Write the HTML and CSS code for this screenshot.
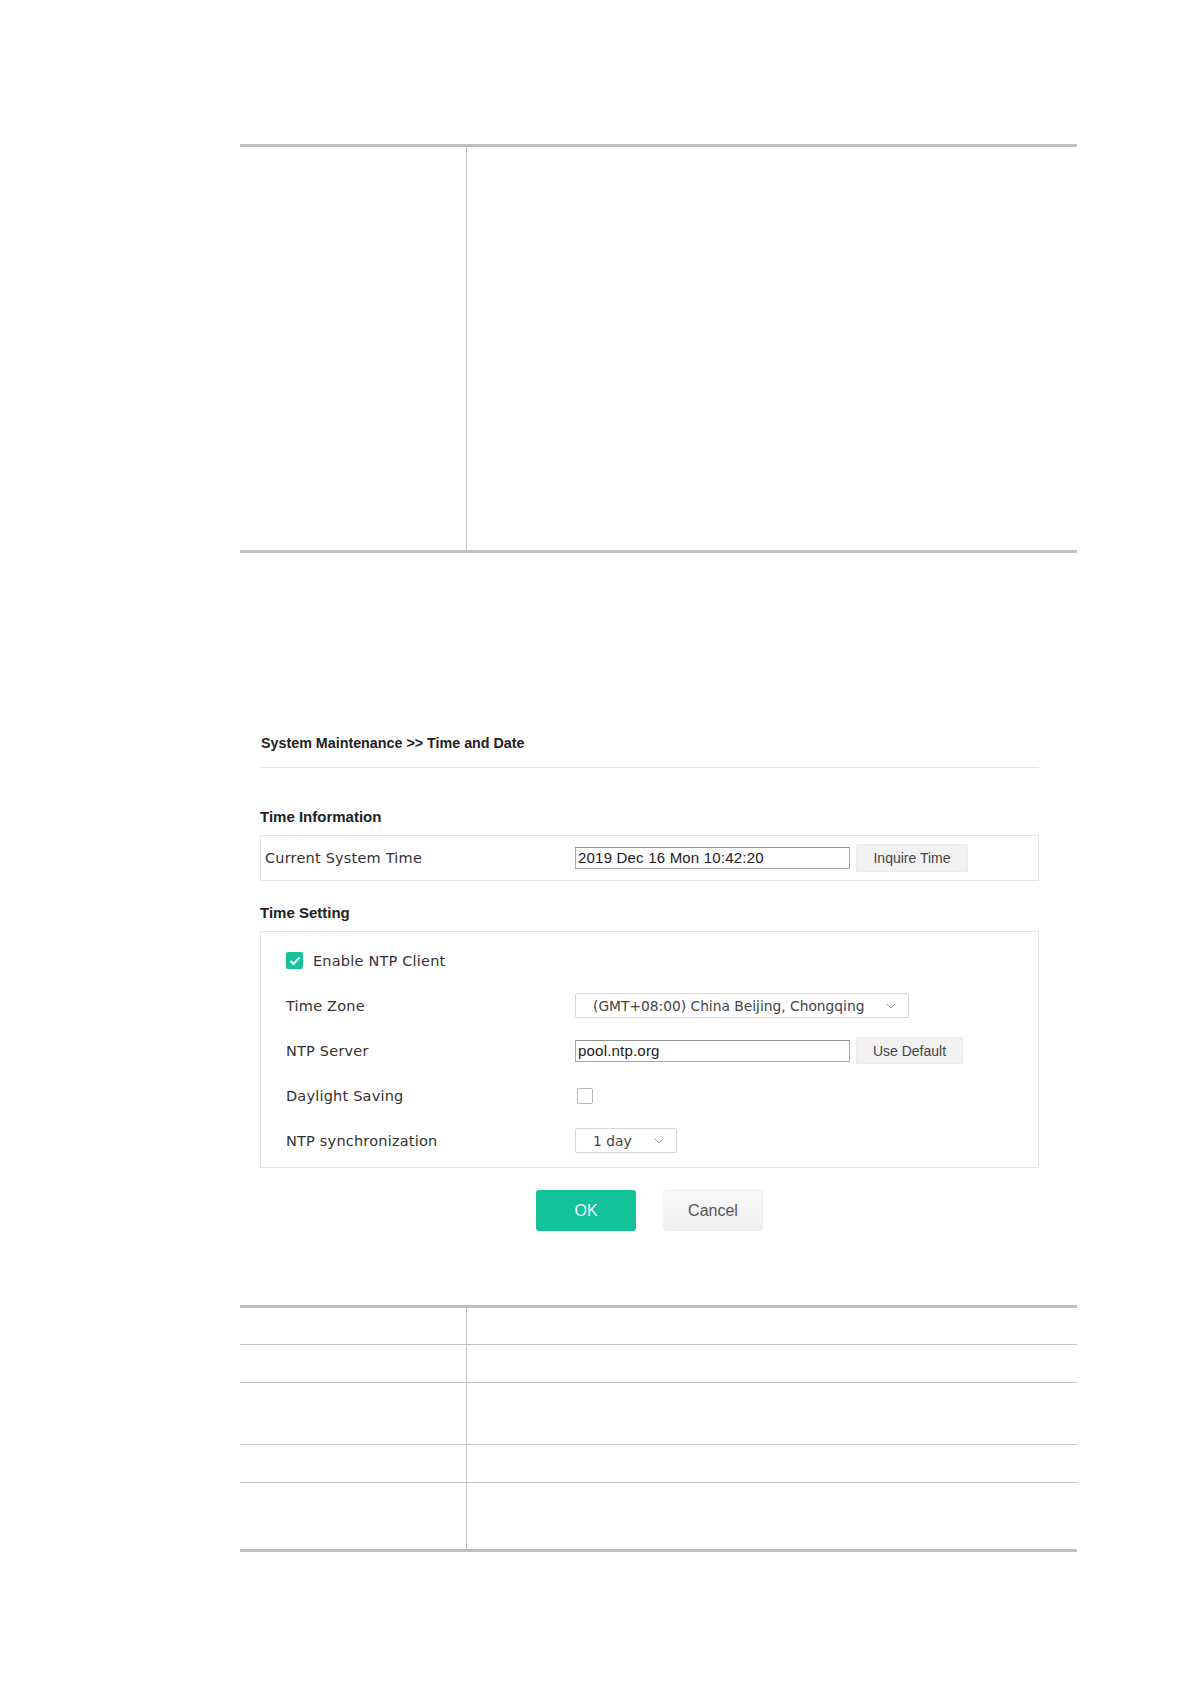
FILE: index.html
```html
<!DOCTYPE html>
<html lang="en">
<head>
  <meta charset="UTF-8" />
  <title>System Maintenance >> Time and Date</title>
  <link rel="stylesheet" href="styles.css">
</head>
<body>

<table class="doc-table top-table">
  <tr><td class="col-a"></td><td></td></tr>
</table>

<div class="panel">
  <div class="panel-title">System Maintenance &gt;&gt; Time and Date</div>

  <div class="section-title">Time Information</div>
  <div class="box box-info">
    <div class="row">
      <span class="label">Current System Time</span>
      <div class="control">
        <span class="text-input">2019 Dec 16 Mon 10:42:20</span>
        <span class="btn-small">Inquire Time</span>
      </div>
    </div>
  </div>

  <div class="section-title">Time Setting</div>
  <div class="box box-setting">
    <div class="row">
      <span class="check on">
        <svg width="12" height="10" viewBox="0 0 12 10"><polyline points="1.5,5 4.5,8 10.5,1.5" fill="none" stroke="#fff" stroke-width="2"/></svg>
      </span>
      <span class="check-label">Enable NTP Client</span>
    </div>
    <div class="row">
      <span class="label">Time Zone</span>
      <div class="control">
        <span class="select select-zone">(GMT+08:00) China Beijing, Chongqing
          <svg class="chev" width="10" height="6" viewBox="0 0 10 6"><polyline points="1,1 5,5 9,1" fill="none" stroke="#999" stroke-width="1"/></svg>
        </span>
      </div>
    </div>
    <div class="row">
      <span class="label">NTP Server</span>
      <div class="control">
        <span class="text-input">pool.ntp.org</span>
        <span class="btn-small btn-default">Use Default</span>
      </div>
    </div>
    <div class="row">
      <span class="label">Daylight Saving</span>
      <div class="control">
        <span class="check off"></span>
      </div>
    </div>
    <div class="row">
      <span class="label">NTP synchronization</span>
      <div class="control">
        <span class="select select-sync">1 day
          <svg class="chev" width="10" height="6" viewBox="0 0 10 6"><polyline points="1,1 5,5 9,1" fill="none" stroke="#999" stroke-width="1"/></svg>
        </span>
      </div>
    </div>
  </div>

  <div class="actions">
    <span class="btn btn-ok">OK</span>
    <span class="btn btn-cancel">Cancel</span>
  </div>
</div>

<table class="doc-table bottom-table">
  <tr class="r1"><td class="col-a"></td><td></td></tr>
  <tr class="r2"><td class="col-a"></td><td></td></tr>
  <tr class="r3"><td class="col-a"></td><td></td></tr>
  <tr class="r4"><td class="col-a"></td><td></td></tr>
  <tr class="r5"><td class="col-a"></td><td></td></tr>
</table>

</body>
</html>
```

FILE: styles.css
```css
body {
  margin: 0;
  background: #fff;
  font-family: "DejaVu Sans", Verdana, sans-serif;
  color: #333;
}
.doc-table {
  margin-left: 240px;
  width: 837px;
  border-collapse: collapse;
  border-top: 3px solid #c0c0c0;
  border-bottom: 3px solid #c0c0c0;
}
.doc-table td {
  padding: 0;
  border-top: 1px solid #c6c6c6;
}
.doc-table .col-a {
  width: 226px;
  border-right: 1px solid #c6c6c6;
}
.top-table {
  margin-top: 144px;
}
.top-table tr {
  height: 406px;
}
.bottom-table {
  margin-top: 74px;
}
.bottom-table .r1 { height: 38px; }
.bottom-table .r2 { height: 38px; }
.bottom-table .r3 { height: 62px; }
.bottom-table .r4 { height: 38px; }
.bottom-table .r5 { height: 68px; }

.panel {
  margin: 180px 0 0 260px;
  width: 779px;
}
.panel-title {
  font-family: "Liberation Sans", Arial, sans-serif;
  font-weight: bold;
  font-size: 14.3px;
  line-height: 20px;
  color: #222;
  padding: 0 0 14px 1px;
  border-bottom: 1px solid #e3e3e3;
}
.section-title {
  font-family: "Liberation Sans", Arial, sans-serif;
  font-weight: bold;
  font-size: 15px;
  line-height: 20px;
  color: #222;
  margin: 39px 0 8px 0;
}
.box + .section-title {
  margin-top: 22px;
  margin-bottom: 8px;
}
.box {
  border: 1px solid #e4e4e4;
}
.box-info {
  height: 44px;
  display: flex;
  align-items: center;
  padding-left: 4px;
}
.box-setting {
  box-sizing: border-box;
  height: 237px;
  padding: 6px 0 0 25px;
}
.row {
  display: flex;
  align-items: center;
  height: 45px;
  font-size: 14.5px;
}
.box-info .row {
  height: auto;
  width: 100%;
}
.label {
  width: 289px;
  flex: none;
  letter-spacing: 0.2px;
}
.box-info .label {
  width: 310px;
}
.control {
  display: flex;
  align-items: center;
  gap: 6px;
}
.text-input {
  box-sizing: border-box;
  width: 275px;
  height: 22px;
  border: 1px solid #a8a8a8;
  border-top-color: #8f8f8f;
  padding: 0 2px;
  font-family: "Liberation Sans", Arial, sans-serif;
  font-size: 15px;
  letter-spacing: 0.2px;
  line-height: 20px;
  color: #222;
}
.btn-small {
  box-sizing: border-box;
  width: 112px;
  height: 28px;
  background: #f2f2f2;
  border: 1px solid #ececec;
  font-family: "Liberation Sans", Arial, sans-serif;
  font-size: 14px;
  color: #444;
  display: flex;
  align-items: center;
  justify-content: center;
}
.btn-default {
  width: 107px;
  height: 27px;
}
.check {
  box-sizing: border-box;
  width: 17px;
  height: 17px;
  border-radius: 2px;
  display: inline-flex;
  align-items: center;
  justify-content: center;
}
.check.on {
  background: #17c29b;
  margin-right: 10px;
}
.check.off {
  box-sizing: border-box;
  width: 16px;
  height: 16px;
  border: 1px solid #b9b9b9;
  margin-left: 2px;
}
.check-label {
  letter-spacing: 0.2px;
}
.select {
  box-sizing: border-box;
  height: 25px;
  border: 1px solid #d4d4d4;
  border-radius: 2px;
  padding: 0 0 0 17px;
  display: flex;
  align-items: center;
  font-size: 13.8px;
  color: #444;
  position: relative;
}
.select-zone {
  width: 334px;
}
.select-sync {
  width: 102px;
}
.chev {
  position: absolute;
  right: 12px;
  top: 9px;
}
.actions {
  display: flex;
  justify-content: center;
  gap: 27px;
  margin-top: 22px;
}
.btn {
  box-sizing: border-box;
  width: 100px;
  height: 41px;
  border-radius: 3px;
  display: flex;
  align-items: center;
  justify-content: center;
  font-family: "Liberation Sans", Arial, sans-serif;
  font-size: 16px;
}
.btn-ok {
  background: #13c298;
  color: #e8fff8;
}
.btn-cancel {
  background: linear-gradient(#f9f9f9, #f0f0f0);
  border: 1px solid #efefef;
  color: #555;
}
```
